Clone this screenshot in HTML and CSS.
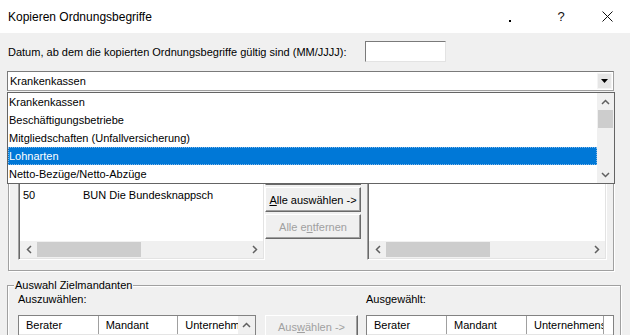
FILE: index.html
```html
<!DOCTYPE html>
<html lang="de">
<head>
<meta charset="utf-8">
<title>Kopieren Ordnungsbegriffe</title>
<link rel="stylesheet" href="styles.css">
</head>
<body>
<div class="window">
  <div class="titlebar">
    <span class="title">Kopieren Ordnungsbegriffe</span>
    <div class="caption">
      <span class="cap cap-min"><span class="min-dot"></span></span>
      <span class="cap cap-help">?</span>
      <span class="cap cap-close"><svg width="11" height="11" viewBox="0 0 11 11"><path d="M0.5 0.5 L10.5 10.5 M10.5 0.5 L0.5 10.5" stroke="#111" stroke-width="1" fill="none"/></svg></span>
    </div>
  </div>

  <div class="date-row">
    <span class="date-label">Datum, ab dem die kopierten Ordnungsbegriffe gültig sind (MM/JJJJ):</span>
    <span class="input"></span>
  </div>

  <div class="combo">
    <span class="combo-text">Krankenkassen</span>
    <span class="combo-btn"><svg width="7" height="4" viewBox="0 0 7 4"><path d="M0 0 H7 L3.5 4 Z" fill="#000"/></svg></span>
    <div class="dropdown">
      <ul class="dd-list">
        <li class="dd-item">Krankenkassen</li>
        <li class="dd-item">Beschäftigungsbetriebe</li>
        <li class="dd-item">Mitgliedschaften (Unfallversicherung)</li>
        <li class="dd-item dd-selected">Lohnarten</li>
        <li class="dd-item">Netto-Bezüge/Netto-Abzüge</li>
      </ul>
      <div class="vscroll">
        <span class="sb-arrow"><svg width="9" height="6" viewBox="0 0 9 6"><path d="M1 5 L4.5 1.5 L8 5" stroke="#606060" stroke-width="1.5" fill="none"/></svg></span>
        <span class="vthumb"></span>
        <span class="sb-fill"></span>
        <span class="sb-arrow"><svg width="9" height="6" viewBox="0 0 9 6"><path d="M1 1 L4.5 4.5 L8 1" stroke="#606060" stroke-width="1.5" fill="none"/></svg></span>
      </div>
    </div>
  </div>

  <div class="group group-src">
    <div class="listbox lb-left">
      <div class="lb-rows">
        <div class="lb-row"><span class="c-nr">5</span><span class="c-name">BKK Mobil Oil Krankenk</span></div>
        <div class="lb-row"><span class="c-nr">50</span><span class="c-name">BUN Die Bundesknappsch</span></div>
      </div>
      <div class="hscroll">
        <span class="sb-arrow-h"><svg width="6" height="9" viewBox="0 0 6 9"><path d="M5 1 L1.5 4.5 L5 8" stroke="#606060" stroke-width="1.5" fill="none"/></svg></span>
        <span class="hthumb hthumb-left"></span>
        <span class="sb-fill"></span>
        <span class="sb-arrow-h"><svg width="6" height="9" viewBox="0 0 6 9"><path d="M1 1 L4.5 4.5 L1 8" stroke="#606060" stroke-width="1.5" fill="none"/></svg></span>
      </div>
    </div>
    <div class="btn-col">
      <button class="btn">Auswählen -&gt;</button>
      <button class="btn">&lt;- Entfernen</button>
      <button class="btn"><u>A</u>lle auswählen -&gt;</button>
      <button class="btn btn-disabled">Alle e<u>n</u>tfernen</button>
    </div>
    <div class="listbox lb-right">
      <div class="lb-rows"></div>
      <div class="hscroll">
        <span class="sb-arrow-h"><svg width="6" height="9" viewBox="0 0 6 9"><path d="M5 1 L1.5 4.5 L5 8" stroke="#606060" stroke-width="1.5" fill="none"/></svg></span>
        <span class="hthumb hthumb-right"></span>
        <span class="sb-fill"></span>
        <span class="sb-arrow-h"><svg width="6" height="9" viewBox="0 0 6 9"><path d="M1 1 L4.5 4.5 L1 8" stroke="#606060" stroke-width="1.5" fill="none"/></svg></span>
      </div>
    </div>
  </div>

  <div class="group group-dst">
    <span class="legend">Auswahl Zielmandanten</span>
    <div class="dst-labels">
      <span class="dst-label-left">Auszuwählen:</span>
      <span>Ausgewählt:</span>
    </div>
    <div class="dst-row">
      <div class="table table-left">
        <div class="thead">
          <span class="th th-berater">Berater</span>
          <span class="th th-mandant">Mandant</span>
          <span class="th th-unt">Unternehm</span>
          <span class="th-scroll"><svg width="9" height="6" viewBox="0 0 9 6"><path d="M1 5 L4.5 1.5 L8 5" stroke="#606060" stroke-width="1.5" fill="none"/></svg></span>
        </div>
      </div>
      <button class="btn btn-disabled btn-add">Aus<u>w</u>ählen -&gt;</button>
      <div class="table table-right">
        <div class="thead">
          <span class="th th-berater">Berater</span>
          <span class="th th-mandant">Mandant</span>
          <span class="th th-unt2">Unternehmens</span>
          <span class="th-rest"></span>
        </div>
      </div>
    </div>
  </div>
</div>
</body>
</html>
```

FILE: styles.css
```css
* { box-sizing: border-box; }

body {
  margin: 0;
  background: #f0f0f0;
}

.window {
  width: 630px;
  height: 335px;
  overflow: hidden;
  background: #f0f0f0;
  font-family: "Liberation Sans", Arial, sans-serif;
  font-size: 11px;
  color: #000;
}

/* title bar */
.titlebar {
  height: 33px;
  background: #fff;
  display: flex;
  align-items: center;
  padding-left: 8px;
}
.title {
  font-size: 12px;
  flex: 1;
}
.caption {
  display: flex;
  height: 33px;
}
.cap {
  width: 46px;
  height: 33px;
  display: flex;
  align-items: center;
  justify-content: center;
}
.cap-min {
  justify-content: flex-start;
  padding-left: 17px;
}
.min-dot {
  width: 2px;
  height: 2px;
  background: #000;
  margin-top: 8px;
}
.cap-help {
  font-size: 13px;
  color: #111;
}

/* date row */
.date-row {
  display: flex;
  align-items: center;
  margin-top: 8px;
  padding-left: 8px;
  height: 21px;
}
.date-label {
  width: 357px;
}
.input {
  width: 81px;
  height: 21px;
  background: #fff;
  border: 1px solid;
  border-color: #7a7a7a #e3e3e3 #e3e3e3 #7a7a7a;
}

/* combo */
.combo {
  position: relative;
  margin: 9px 0 0 7px;
  width: 607px;
  height: 20px;
  background: #fff;
  border: 1px solid;
  border-color: #7a7a7a #a0a0a0 #a0a0a0 #7a7a7a;
  display: flex;
  align-items: center;
}
.combo-text {
  flex: 1;
  padding-left: 2px;
}
.combo-btn {
  width: 15px;
  height: 16px;
  margin-right: 1px;
  background: #e6e6e6;
  border: 1px solid #f4f4f4;
  display: flex;
  align-items: center;
  justify-content: center;
}

.dropdown {
  position: absolute;
  top: 20px;
  left: -1px;
  width: 608px;
  height: 92px;
  background: #fff;
  border: 1px solid #646464;
  display: flex;
  z-index: 5;
}
.dd-list {
  list-style: none;
  margin: 0;
  padding: 0;
  flex: 1;
}
.dd-item {
  height: 18px;
  line-height: 18px;
  padding-left: 1px;
  white-space: nowrap;
}
.dd-selected {
  background: #0078d7;
  color: #fff;
  outline: 1px dotted #7fb6e8;
  outline-offset: -1px;
}
.vscroll {
  width: 17px;
  background: #f0f0f0;
  display: flex;
  flex-direction: column;
}
.sb-arrow {
  height: 17px;
  display: flex;
  align-items: center;
  justify-content: center;
}
.vthumb {
  height: 18px;
  margin: 0 1px;
  background: #cdcdcd;
}
.sb-fill { flex: 1; }

/* groups */
.group {
  border: 1px solid #a0a0a0;
  box-shadow: inset 1px 1px 0 #fff, 1px 1px 0 #fff;
}
.group-src {
  margin: 7px 0 0 8px;
  width: 606px;
  height: 173px;
  display: flex;
  align-items: flex-end;
  padding: 0 0 10px 9px;
}

.listbox {
  height: 150px;
  background: #fff;
  border: 1px solid;
  border-color: #a0a0a0 #fff #fff #a0a0a0;
  box-shadow: inset 1px 1px 0 #696969, inset -1px -1px 0 #e3e3e3;
  padding: 1px;
  display: flex;
  flex-direction: column;
}
.lb-left { width: 247px; }
.lb-right { width: 240px; margin-left: 6px; }

.lb-rows {
  flex: 1;
  padding-top: 59px;
  overflow: hidden;
}
.lb-row {
  height: 16px;
  line-height: 16px;
  display: flex;
  white-space: nowrap;
}
.c-nr { width: 63px; padding-left: 3px; }
.c-name { flex: 1; }

.hscroll {
  height: 17px;
  background: #f0f0f0;
  display: flex;
  align-items: center;
}
.sb-arrow-h {
  width: 17px;
  height: 17px;
  display: flex;
  align-items: center;
  justify-content: center;
}
.hthumb {
  height: 15px;
  background: #cdcdcd;
}
.hthumb-left { width: 104px; }
.hthumb-right { width: 104px; }

.btn-col {
  width: 96px;
  display: flex;
  flex-direction: column;
  gap: 2px;
  padding-bottom: 21px;
}
.btn {
  font-family: "Liberation Sans", Arial, sans-serif;
  font-size: 11px;
  color: #000;
  height: 25px;
  width: 96px;
  padding: 0;
  background: #f0f0f0;
  border: 1px solid;
  border-color: #fff #696969 #696969 #fff;
  box-shadow: inset -1px -1px 0 #a0a0a0;
}
.btn-disabled { color: #a0a0a0; }

/* destination group */
.group-dst {
  margin: 14px 0 0 7px;
  width: 614px;
  height: 80px;
  line-height: 13px;
  padding-left: 10px;
}
.legend {
  display: block;
  width: max-content;
  margin: -7px 0 0 -4px;
  padding: 0 1px;
  background: #f0f0f0;
}
.dst-labels {
  display: flex;
  height: 14px;
  line-height: 14px;
}
.dst-label-left { width: 348px; }

.dst-row {
  display: flex;
  margin-top: 9px;
  align-items: flex-start;
}
.table {
  height: 40px;
  background: #fff;
  border: 1px solid #828282;
}
.table-left { width: 238px; }
.table-right { width: 248px; margin-left: 8px; }
.btn-add {
  width: 93px;
  margin-left: 9px;
  height: 24px;
}
.thead {
  display: flex;
  height: 19px;
  border-bottom: 1px solid #e5e5e5;
}
.th {
  width: 80px;
  line-height: 18px;
  padding-left: 7px;
  border-right: 1px solid #a0a0a0;
  white-space: nowrap;
  overflow: hidden;
}
.th-unt { width: 60px; border-right: none; }
.th-unt2 { width: 77px; }
.th-rest { flex: 1; }
.th-scroll {
  width: 17px;
  background: #f0f0f0;
  display: flex;
  align-items: center;
  justify-content: center;
}
```
